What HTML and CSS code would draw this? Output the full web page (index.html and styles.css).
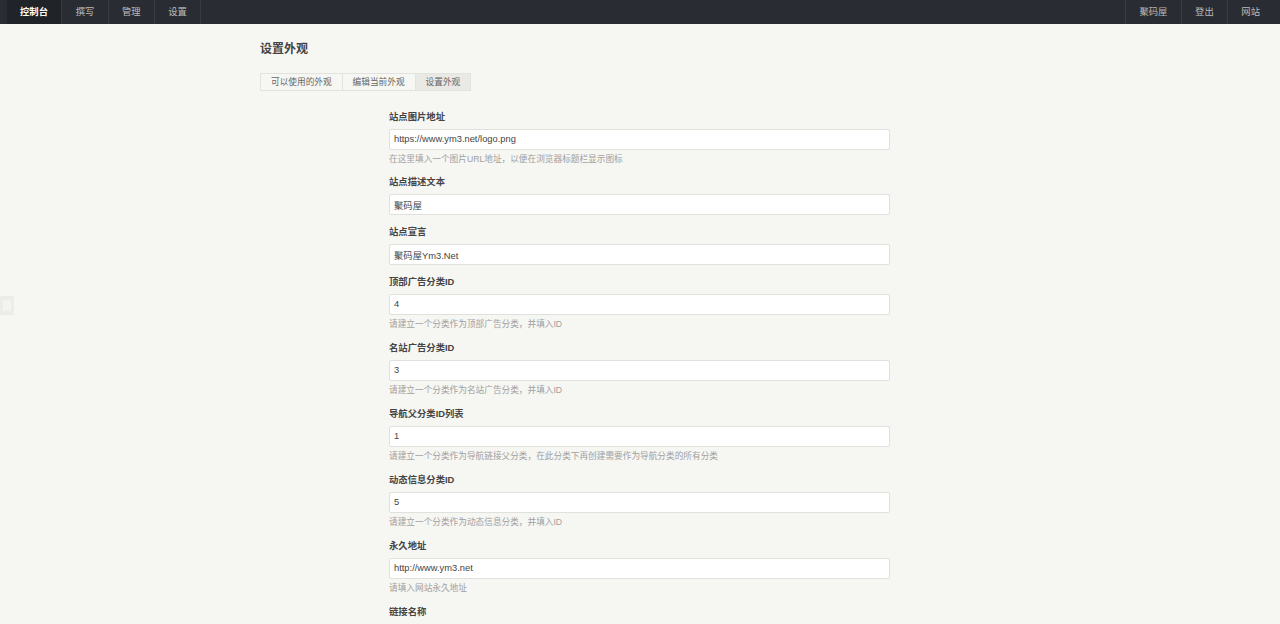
FILE: index.html
```html
<!DOCTYPE html>
<html lang="zh-CN">
<head>
<meta charset="utf-8">
<title>设置外观</title>
<link rel="stylesheet" href="styles.css">
</head>
<body>
<div class="head-nav">
  <nav class="nav-list">
    <a class="nav-item focus" href="#">控制台</a>
    <a class="nav-item" href="#">撰写</a>
    <a class="nav-item" href="#">管理</a>
    <a class="nav-item" href="#">设置</a>
  </nav>
  <div class="operate">
    <a class="op-item" href="#">聚码屋</a>
    <a class="op-item" href="#">登出</a>
    <a class="op-item" href="#">网站</a>
  </div>
</div>

<div class="side-widget"><span class="side-inner"></span></div>

<main class="container">
  <h2 class="page-title">设置外观</h2>
  <ul class="option-tabs">
    <li class="tab"><a href="#">可以使用的外观</a></li>
    <li class="tab"><a href="#">编辑当前外观</a></li>
    <li class="tab current"><a href="#">设置外观</a></li>
  </ul>

  <form class="settings">
    <ul class="option">
      <li>
        <label class="label">站点图片地址</label>
        <input class="text" type="text" value="https://www.ym3.net/logo.png">
        <p class="description">在这里填入一个图片URL地址，以便在浏览器标题栏显示图标</p>
      </li>
    </ul>
    <ul class="option">
      <li>
        <label class="label">站点描述文本</label>
        <input class="text" type="text" value="聚码屋">
      </li>
    </ul>
    <ul class="option">
      <li>
        <label class="label">站点宣言</label>
        <input class="text" type="text" value="聚码屋Ym3.Net">
      </li>
    </ul>
    <ul class="option">
      <li>
        <label class="label">顶部广告分类ID</label>
        <input class="text" type="text" value="4">
        <p class="description">请建立一个分类作为顶部广告分类，并填入ID</p>
      </li>
    </ul>
    <ul class="option">
      <li>
        <label class="label">名站广告分类ID</label>
        <input class="text" type="text" value="3">
        <p class="description">请建立一个分类作为名站广告分类，并填入ID</p>
      </li>
    </ul>
    <ul class="option">
      <li>
        <label class="label">导航父分类ID列表</label>
        <input class="text" type="text" value="1">
        <p class="description">请建立一个分类作为导航链接父分类，在此分类下再创建需要作为导航分类的所有分类</p>
      </li>
    </ul>
    <ul class="option">
      <li>
        <label class="label">动态信息分类ID</label>
        <input class="text" type="text" value="5">
        <p class="description">请建立一个分类作为动态信息分类，并填入ID</p>
      </li>
    </ul>
    <ul class="option">
      <li>
        <label class="label">永久地址</label>
        <input class="text" type="text" value="http://www.ym3.net">
        <p class="description">请填入网站永久地址</p>
      </li>
    </ul>
    <ul class="option">
      <li>
        <label class="label">链接名称</label>
        <input class="text" type="text" value="聚码屋">
      </li>
    </ul>
  </form>
</main>
</body>
</html>
```

FILE: styles.css
```css
html {
  overflow: hidden;
}

body {
  margin: 0;
  background: #F6F6F3;
  color: #444;
  font-family: "Liberation Sans", "Noto Sans CJK SC", sans-serif;
  font-size: 9.33px;
}

a {
  text-decoration: none;
}

/* ---------- top navigation ---------- */
.head-nav {
  display: flex;
  justify-content: space-between;
  height: 24px;
  padding: 0 6.67px;
  background: #292D33;
}

.nav-list,
.operate {
  display: flex;
}

.nav-item {
  display: block;
  padding: 0 13.33px;
  line-height: 24px;
  color: #BBB;
  border-right: 1px solid #383D45;
}

.nav-item.focus {
  background: #202328;
  color: #FFF;
  font-weight: bold;
}

.op-item {
  display: block;
  padding: 0 13.33px;
  line-height: 24px;
  color: #BBB;
  border-left: 1px solid #383D45;
}

/* ---------- floating side widget ---------- */
.side-widget {
  position: absolute;
  left: 0;
  top: 296px;
  width: 14px;
  height: 19px;
  background: #ECECE9;
  display: flex;
  align-items: center;
  justify-content: center;
}

.side-inner {
  display: block;
  width: 8px;
  height: 11px;
  background: #F3F3F0;
}

/* ---------- main ---------- */
.container {
  width: 760px;
  margin: 0 auto;
}

.page-title {
  margin: 18px 0 0;
  font-size: 12px;
  line-height: 14px;
  font-weight: bold;
  color: #444;
}

.option-tabs {
  list-style: none;
  margin: 17px 0 0;
  padding: 0;
  display: flex;
  font-size: 8.67px;
}

.tab a {
  display: block;
  height: 16px;
  line-height: 16px;
  padding: 0 10px;
  border: 1px solid #E2E2DF;
  color: #666;
}

.tab + .tab a {
  border-left: none;
}

.tab.current a {
  background: #E9E9E6;
}

/* ---------- form ---------- */
.settings {
  margin: 18.5px 0 0 129px;
  width: 501px;
}

.option {
  list-style: none;
  margin: 0 0 9.6px;
  padding: 0;
}

.label {
  display: block;
  font-weight: bold;
  line-height: 14px;
  margin-bottom: 5px;
  color: #444;
}

.text {
  display: block;
  box-sizing: border-box;
  width: 100%;
  height: 21px;
  margin: 0;
  padding: 0 4px;
  border: 1px solid #E0E0DD;
  border-radius: 2px;
  background: #FFF;
  font-family: "Liberation Sans", "Noto Sans CJK SC", sans-serif;
  font-size: 9.33px;
  color: #444;
  outline: none;
}

.description {
  margin: 2.4px 0 0;
  line-height: 14px;
  font-size: 8.67px;
  color: #A0A0A0;
}
```
